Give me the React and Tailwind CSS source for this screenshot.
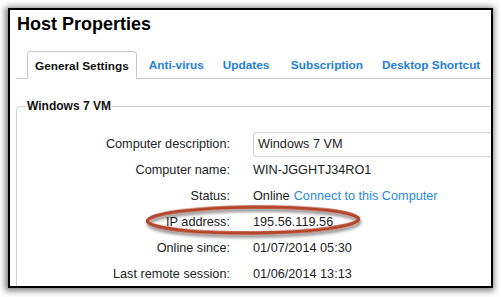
import React from 'react';

const rows = [
  { label: 'Computer name:', value: 'WIN-JGGHTJ34RO1' },
  { label: 'Status:', value: 'Online', link: 'Connect to this Computer' },
  { label: 'IP address:', value: '195.56.119.56' },
  { label: 'Online since:', value: '01/07/2014 05:30' },
  { label: 'Last remote session:', value: '01/06/2014 13:13' },
];

const tabs = [
  { name: 'Anti-virus', ml: 'ml-[12px]' },
  { name: 'Updates', ml: 'ml-[19px]' },
  { name: 'Subscription', ml: 'ml-[21.5px]' },
  { name: 'Desktop Shortcut', ml: 'ml-[19px]' },
];

const App = () => {
  return (
    <div className="relative w-[501px] h-[297px] bg-white overflow-hidden font-['Liberation_Sans',Arial,sans-serif]">
      <div className="ml-[8px] mt-[8px] w-[485px] h-[280px] border-2 border-black bg-white overflow-hidden shadow-[-1px_1px_6px_2px_rgba(0,0,0,0.5)]">
        <h1 className="pl-[7px] pt-[5px] text-[18px] leading-[18px] font-bold text-black">Host Properties</h1>

        <div className="mt-[18px] ml-[6px] w-[500px] flex items-end border-b border-[#c8c8c8] text-[11.8px] font-bold">
          <div className="ml-[11px] -mb-px h-[28px] flex items-center pt-[2px] px-[7px] border border-b-0 border-[#c8c8c8] rounded-t-[4px] bg-white text-[#111]">
            General Settings
          </div>
          {tabs.map((t) => (
            <span key={t.name} className={`${t.ml} h-[27px] pt-[2px] flex items-center text-[#1f80d8] whitespace-nowrap`}>
              {t.name}
            </span>
          ))}
        </div>

        <fieldset className="mt-[20px] ml-[6px] w-[500px] border border-[#d0d0d0] rounded-[4px] pt-[19px] pb-[30px]">
          <legend className="ml-[9px] px-[1px] text-[12px] leading-[14px] font-bold text-[#111]">Windows 7 VM</legend>
          <div className="grid grid-cols-[213px_1fr] gap-x-[23px] text-[12.7px] text-[#1c1c24]">
            <div className="h-[26px] flex items-start justify-end pt-[5px] leading-[14px]">Computer description:</div>
            <div className="h-[26px]">
              <div className="h-[25px] w-[320px] border border-[#cfcfcf] rounded-[3px] pl-[4px] flex items-center">Windows 7 VM</div>
            </div>
            {rows.map((r) => (
              <React.Fragment key={r.label}>
                <div className="h-[26px] flex items-center justify-end">{r.label}</div>
                <div className="h-[26px] flex items-center whitespace-nowrap">
                  {r.value}
                  {r.link && <span className="ml-[4px] text-[#2a8ae0]">{r.link}</span>}
                </div>
              </React.Fragment>
            ))}
          </div>
        </fieldset>
      </div>

      {/* hand-drawn highlight around the IP address row */}
      <svg className="absolute inset-0 pointer-events-none" width="501" height="297" viewBox="0 0 501 297">
        <defs>
          <filter id="sh" x="-10%" y="-50%" width="120%" height="200%">
            <feDropShadow dx="1" dy="3" stdDeviation="1.6" floodColor="#000" floodOpacity="0.45" />
          </filter>
        </defs>
        <ellipse cx="253" cy="220" rx="105.5" ry="13" fill="none" stroke="#b3472f" strokeWidth="3.5" filter="url(#sh)" transform="rotate(-0.5 253 220)" />
      </svg>
    </div>
  );
};

export default App;
